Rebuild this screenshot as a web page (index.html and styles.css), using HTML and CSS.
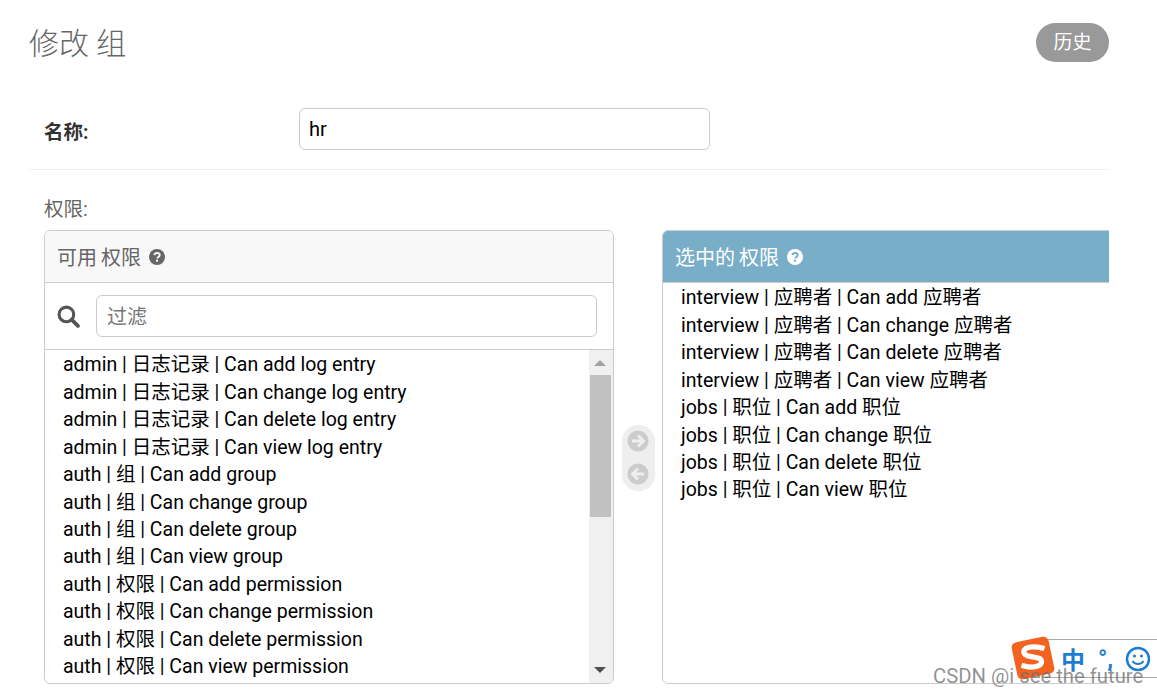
FILE: index.html
```html
<!DOCTYPE html>
<html>
<head>
  <meta charset="utf-8">
  <title>修改 组</title>
  <link rel="stylesheet" href="styles.css">
</head>
<body>

<div class="content">
  <div class="title-row">
    <h1>修改 组</h1>
    <a class="history" href="#">历史</a>
  </div>

  <div class="form-row">
    <label class="name-label">名称:</label>
    <input class="name-input" type="text" value="hr">
  </div>

  <div class="perm-row">
    <div class="perm-label">权限:</div>
    <div class="chooser">

      <div class="box box-available">
        <div class="box-head">
          可用 权限
          <svg class="help" viewBox="0 0 16 16"><circle cx="8" cy="8" r="8" fill="currentColor"/><path d="M5.4 6.2c.2-1.5 1.3-2.2 2.7-2.2 1.500 0 2.600.9 2.600 2.100 0 1.800-2.400 1.900-2.400 3.500" fill="none" stroke="#f8f8f8" stroke-width="2"/><rect x="7" y="10.700" width="2" height="2" fill="#f8f8f8"/></svg>
        </div>
        <div class="filter">
          <svg class="search" viewBox="0 0 22 22"><circle cx="9" cy="9" r="7" fill="none" stroke="currentColor" stroke-width="3"/><path d="M14 14l6 6" stroke="currentColor" stroke-width="3.600" stroke-linecap="round"/></svg>
          <input class="filter-input" type="text" placeholder="过滤">
        </div>
        <div class="list-wrap">
          <ul class="list">
            <li>admin | 日志记录 | Can add log entry</li>
            <li>admin | 日志记录 | Can change log entry</li>
            <li>admin | 日志记录 | Can delete log entry</li>
            <li>admin | 日志记录 | Can view log entry</li>
            <li>auth | 组 | Can add group</li>
            <li>auth | 组 | Can change group</li>
            <li>auth | 组 | Can delete group</li>
            <li>auth | 组 | Can view group</li>
            <li>auth | 权限 | Can add permission</li>
            <li>auth | 权限 | Can change permission</li>
            <li>auth | 权限 | Can delete permission</li>
            <li>auth | 权限 | Can view permission</li>
          </ul>
          <div class="scrollbar">
            <div class="arrow-up"></div>
            <div class="thumb"></div>
            <div class="arrow-down"></div>
          </div>
        </div>
      </div>

      <div class="movers">
        <div class="pill">
          <svg class="mover" viewBox="0 0 22 22"><circle cx="11" cy="11" r="10.500" fill="#ccc"/><path d="M5 11h11M11 5.500l5.500 5.500-5.500 5.500" fill="none" stroke="#eee" stroke-width="3"/></svg>
          <svg class="mover" viewBox="0 0 22 22"><circle cx="11" cy="11" r="10.500" fill="#ccc"/><path d="M17 11h-11M11 5.500l-5.500 5.500 5.500 5.500" fill="none" stroke="#eee" stroke-width="3"/></svg>
        </div>
      </div>

      <div class="box box-chosen">
        <div class="box-head head-chosen">
          选中的 权限
          <svg class="help" viewBox="0 0 16 16"><circle cx="8" cy="8" r="8" fill="currentColor"/><path d="M5.4 6.2c.2-1.5 1.3-2.2 2.7-2.2 1.500 0 2.600.9 2.600 2.100 0 1.800-2.400 1.900-2.400 3.500" fill="none" stroke="#79aec8" stroke-width="2"/><rect x="7" y="10.700" width="2" height="2" fill="#79aec8"/></svg>
        </div>
        <ul class="list list-chosen">
          <li>interview | 应聘者 | Can add 应聘者</li>
          <li>interview | 应聘者 | Can change 应聘者</li>
          <li>interview | 应聘者 | Can delete 应聘者</li>
          <li>interview | 应聘者 | Can view 应聘者</li>
          <li>jobs | 职位 | Can add 职位</li>
          <li>jobs | 职位 | Can change 职位</li>
          <li>jobs | 职位 | Can delete 职位</li>
          <li>jobs | 职位 | Can view 职位</li>
        </ul>
      </div>

    </div>
  </div>
</div>

<!-- input method bar and watermark sit over the page -->
<div class="ime">
  <svg class="ime-logo" viewBox="0 0 44 44"><rect x="4" y="4" width="36" height="36" rx="5" fill="#f4621f" transform="rotate(-12 22 22)"/><path d="M33 13c-6-2-14-2.500-18 0-3 2-2 6 2 7l10 2c4 1 4 5 1 7-4 2-11 2-17 0" fill="none" stroke="#fff" stroke-width="5"/></svg>
  <span class="ime-zh">中</span>
  <span class="ime-dot">°,</span>
  <svg class="ime-face" viewBox="0 0 26 26"><circle cx="13" cy="13" r="11" fill="none" stroke="#1c7ed0" stroke-width="2.500"/><circle cx="9.500" cy="10" r="1.500" fill="#1c7ed0"/><circle cx="16.500" cy="10" r="1.500" fill="#1c7ed0"/><path d="M7.500 15c2.500 4 8.500 4 11 0" fill="none" stroke="#1c7ed0" stroke-width="2"/></svg>
</div>
<div class="watermark">CSDN @i see the future</div>

</body>
</html>
```

FILE: styles.css
```css
* {
  margin: 0;
  padding: 0;
  box-sizing: border-box;
}
html, body {
  height: 694px;
  overflow: hidden;
}
body {
  background: #fff;
  color: #333;
  font-family: Roboto, "Noto Sans CJK SC", sans-serif;
  font-size: 20px;
}
ul {
  list-style: none;
}
.content {
  width: 1109px;
  padding-left: 29px;
  overflow: hidden;
}

/* title */
.title-row {
  display: flex;
  justify-content: space-between;
  align-items: flex-start;
  height: 108px;
  padding-top: 24px;
}
h1 {
  font-size: 30px;
  font-weight: 300;
  line-height: 40px;
  color: #666;
}
.history {
  width: 73px;
  height: 39px;
  margin-top: -1px;
  border-radius: 20px;
  background: #999;
  color: #fff;
  font-size: 19px;
  line-height: 39px;
  text-align: center;
  text-decoration: none;
}

/* name */
.form-row {
  display: flex;
  align-items: flex-start;
  height: 62px;
  padding-left: 15px;
  border-bottom: 1px solid #eee;
}
.name-label {
  width: 255px;
  font-size: 19.5px;
  font-weight: 700;
  line-height: 49px;
}
.name-input {
  width: 411px;
  height: 42px;
  padding: 0 9px;
  border: 1px solid #ccc;
  border-radius: 6px;
  font: inherit;
  color: #000;
  outline: none;
}

/* permissions */
.perm-row {
  padding: 24px 0 0 15px;
}
.perm-label {
  height: 36px;
  font-size: 19.5px;
  line-height: 31px;
  color: #666;
}
.chooser {
  display: flex;
  align-items: stretch;
  height: 454px;
  width: 1100px;
}
.box {
  border: 1px solid #ccc;
  border-radius: 6px;
  overflow: hidden;
  display: flex;
  flex-direction: column;
}
.box-available {
  flex: 0 0 570px;
}
.box-chosen {
  flex: 0 0 470px;
}
.box-head {
  flex: 0 0 52px;
  display: flex;
  align-items: center;
  gap: 8px;
  padding-left: 12px;
  background: #f8f8f8;
  border-bottom: 1px solid #ccc;
  color: #666;
  word-spacing: -1px;
}
.head-chosen {
  background: #79aec8;
  color: #fff;
}
.help {
  width: 16px;
  height: 16px;
}
.filter {
  flex: 0 0 67px;
  display: flex;
  align-items: center;
  gap: 16px;
  padding: 0 16px 0 12px;
  border-bottom: 1px solid #ccc;
  color: #555;
}
.search {
  width: 23px;
  height: 23px;
}
.filter-input {
  flex: 1;
  height: 42px;
  padding: 1px 10px 0;
  border: 1px solid #ccc;
  border-radius: 6px;
  font: inherit;
  outline: none;
}
.filter-input::placeholder {
  color: #777;
}
.list-wrap {
  flex: 1;
  display: flex;
  min-height: 0;
}
.list {
  flex: 1;
  padding: 1.4px 0 0 18px;
  color: #000;
  font-size: 19.5px;
}
.list li {
  height: 27.45px;
  line-height: 27.45px;
  white-space: nowrap;
}

/* fake scrollbar */
.scrollbar {
  flex: 0 0 24px;
  display: flex;
  flex-direction: column;
  align-items: center;
  padding-right: 2px;
  background: #f0f0f0;
}
.arrow-up {
  margin: 10px 0 9px;
  border: 6px solid transparent;
  border-top: 0;
  border-bottom: 6px solid #a3a3a3;
}
.thumb {
  width: 21px;
  height: 142px;
  background: #c1c1c1;
}
.arrow-down {
  margin-top: auto;
  margin-bottom: 10px;
  border: 6px solid transparent;
  border-bottom: 0;
  border-top: 6px solid #505050;
}

/* arrows between boxes */
.movers {
  flex: 0 0 48px;
  display: flex;
  align-items: center;
  justify-content: center;
  padding-top: 2px;
}
.pill {
  display: flex;
  flex-direction: column;
  align-items: center;
  gap: 11px;
  width: 33px;
  height: 66px;
  padding-top: 5px;
  border-radius: 16px;
  background: #eee;
}
.mover {
  width: 22px;
  height: 22px;
}

/* overlays */
.ime {
  position: absolute;
  left: 1045px;
  top: 639px;
  width: 112px;
  height: 39px;
  background: #fff;
  border: 1px solid #aaa;
  border-right: 0;
  border-left: 0;
  display: flex;
  align-items: center;
}
.ime-logo {
  position: absolute;
  left: -35px;
  top: -5px;
  width: 46px;
  height: 46px;
}
.ime-zh {
  margin-left: 16px;
  color: #1c7ed0;
  font-size: 24px;
  font-weight: 700;
}
.ime-dot {
  margin-left: 13px;
  color: #1c7ed0;
  font-size: 24px;
  font-weight: 700;
  line-height: 30px;
}
.ime-face {
  margin-left: 12px;
  width: 26px;
  height: 26px;
}
.watermark {
  position: absolute;
  left: 933px;
  top: 663px;
  color: rgba(110, 110, 110, 0.75);
  font-size: 20.3px;
  line-height: 26px;
  white-space: nowrap;
}
```
